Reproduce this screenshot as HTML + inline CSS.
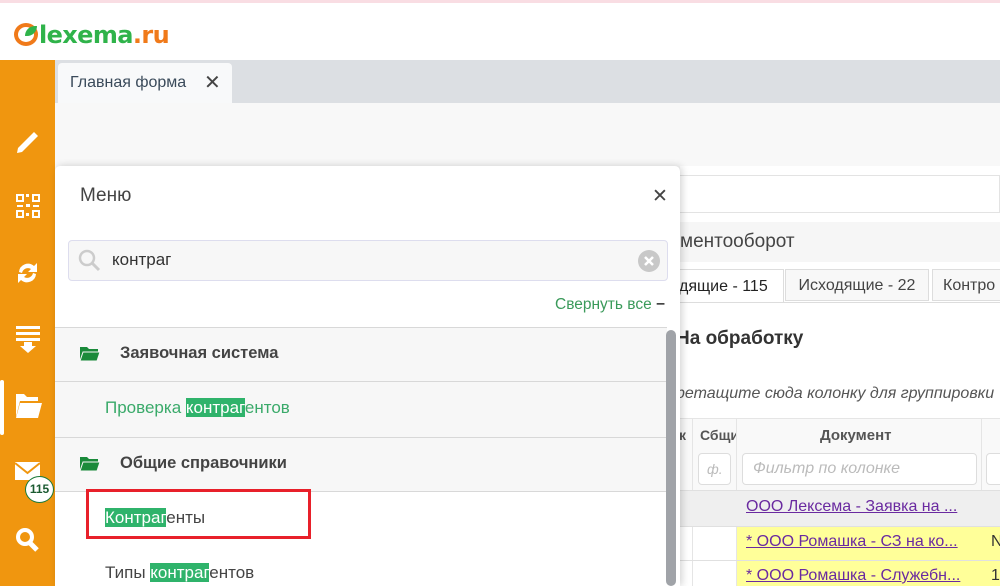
<!DOCTYPE html>
<html><head><meta charset="utf-8"><style>
*{box-sizing:border-box;margin:0;padding:0}
body{width:1000px;height:586px;overflow:hidden;position:relative;background:#fff;font-family:"Liberation Sans","DejaVu Sans",sans-serif;color:#333}
.abs{position:absolute}
.hl{background:#2fb36b;color:#fff}
</style></head><body>
<div class="abs" style="left:0;top:0;width:1000px;height:3px;background:#f9dde3"></div>
<div class="abs" style="left:14px;top:18px;font-size:24px;font-weight:bold;letter-spacing:-0.6px;height:34px;line-height:34px;font-family:'DejaVu Sans',sans-serif">
<span style="display:inline-block;width:24px;height:23px;border:4px solid #f07a1a;border-radius:50%;vertical-align:-3px;position:relative;margin-right:1px"><span style="position:absolute;left:7px;top:-1px;width:12px;height:10px;background:#2fb34a;border-radius:10px 0 10px 0"></span></span><span style="color:#2fb34a">lexema</span><span style="color:#f07a1a">.ru</span></div>
<div class="abs" style="left:0;top:60px;width:55px;height:526px;background:#f0960f"></div>
<div class="abs" style="left:0;top:380px;width:4px;height:55px;background:#fff;border-radius:2px"></div>
<svg class="abs" style="left:10px;top:122px" width="36" height="440" viewBox="0 0 36 440" fill="#fff">
<path d="M8 26 L24 10 L28 14 L12 30 L7 31Z"/>
<g transform="translate(6,72)"><rect x="0" y="0" width="8" height="8"/><rect x="2" y="2" width="4" height="4" fill="#f0960f"/><rect x="16" y="0" width="8" height="8"/><rect x="18" y="2" width="4" height="4" fill="#f0960f"/><rect x="0" y="16" width="8" height="8"/><rect x="2" y="18" width="4" height="4" fill="#f0960f"/><rect x="16" y="16" width="8" height="8"/><rect x="18" y="18" width="4" height="4" fill="#f0960f"/><rect x="10" y="0" width="3" height="3"/><rect x="10" y="10" width="4" height="3"/><rect x="1" y="11" width="6" height="2"/><rect x="17" y="11" width="6" height="2"/><rect x="10" y="19" width="3" height="3"/></g>
<path d="M9 150 a9 9 0 0 1 15 -6 l3 -3 v9 h-9 l3 -3 a6 6 0 0 0 -9 4z M26 152 a9 9 0 0 1 -15 6 l-3 3 v-9 h9 l-3 3 a6 6 0 0 0 9 -4z"/>
<g transform="translate(6,204)"><rect x="0" y="0" width="24" height="3"/><rect x="0" y="6" width="24" height="3"/><rect x="0" y="12" width="24" height="3"/><path d="M8 16 h8 v4 h4 l-8 7 l-8 -7 h4z"/></g>
<path d="M6 272 h8 l3 3 h11 v4 h-18 l-4 16 z M10 281 h22 l-4 15 h-22z"/>
<path d="M5 340 h25 v18 h-25z" /><path d="M5 341 l12.5 10 l12.5 -10" stroke="#f0960f" stroke-width="2" fill="none"/>
<circle cx="15" cy="415" r="7" fill="none" stroke="#fff" stroke-width="4"/><path d="M19 420 l8 8" stroke="#fff" stroke-width="5"/>
</svg>
<div class="abs" style="left:25px;top:476px;width:29px;height:27px;border-radius:50%;background:#fff;border:1px solid #1a7a3a;color:#1a5a30;font-size:12px;font-weight:bold;text-align:center;line-height:25px">115</div>
<div class="abs" style="left:55px;top:60px;width:945px;height:43px;background:#dcdfe3"></div>
<div class="abs" style="left:58px;top:63px;width:174px;height:40px;background:#f8f9fa;border-radius:4px 4px 0 0;font-size:16px;color:#3a4a5a;line-height:40px;padding-left:12px">Главная форма<span style="position:absolute;left:146px;font-size:20px;color:#444;font-weight:bold">✕</span></div>
<div class="abs" style="left:55px;top:103px;width:945px;height:483px;background:#f8f8f8"></div>
<div class="abs" style="left:680px;top:166px;width:320px;height:420px;background:#fff"></div>
<div class="abs" style="left:676px;top:175px;width:324px;height:38px;border:1px solid #e3e3e3;background:#fff"></div>
<div class="abs" style="left:676px;top:222px;width:324px;height:40px;background:#f6f6f6;font-size:19px;line-height:40px;color:#444;padding-left:4px">ментооборот</div>
<div class="abs" style="left:676px;top:269px;width:108px;height:34px;border:1px solid #ddd;border-bottom:none;background:#fff;font-size:16px;line-height:34px;color:#222;padding-left:2px">дящие - 115</div>
<div class="abs" style="left:785px;top:269px;width:144px;height:32px;border:1px solid #ddd;background:#f8f8f8;font-size:16px;line-height:32px;color:#444;text-align:center">Исходящие - 22</div>
<div class="abs" style="left:932px;top:269px;width:80px;height:32px;border:1px solid #ddd;background:#f8f8f8;font-size:16px;line-height:32px;color:#444;padding-left:10px">Контро</div>
<div class="abs" style="left:676px;top:302px;width:324px;height:1px;background:#ddd"></div>
<div class="abs" style="left:676px;top:328px;font-size:19px;font-weight:bold;color:#333">На обработку</div>
<div class="abs" style="left:676px;top:385px;font-size:16px;font-style:italic;color:#555;white-space:nowrap">ретащите сюда колонку для группировки</div>
<div class="abs" style="left:676px;top:418px;width:324px;height:72px;background:#f9f9f9;border-top:1px solid #e5e5e5"></div>
<div class="abs" style="left:692px;top:418px;width:1px;height:168px;background:#e5e5e5"></div>
<div class="abs" style="left:736px;top:418px;width:1px;height:168px;background:#e5e5e5"></div>
<div class="abs" style="left:981px;top:418px;width:1px;height:168px;background:#e5e5e5"></div>
<div class="abs" style="left:679px;top:427px;font-size:14px;font-weight:bold;color:#555">к</div>
<div class="abs" style="left:700px;top:427px;font-size:14px;font-weight:bold;color:#555;width:36px;overflow:hidden;white-space:nowrap">Сбщи</div>
<div class="abs" style="left:820px;top:427px;font-size:15px;font-weight:bold;color:#555">Документ</div>
<div class="abs" style="left:698px;top:453px;width:33px;height:32px;border:1px solid #ddd;border-radius:4px;background:#fff;font-size:14px;font-style:italic;color:#bbb;line-height:30px;padding-left:8px">ф.</div>
<div class="abs" style="left:742px;top:453px;width:235px;height:32px;border:1px solid #ddd;border-radius:4px;background:#fff;font-size:16px;font-style:italic;color:#bbb;line-height:30px;padding-left:10px">Фильтр по колонке</div>
<div class="abs" style="left:986px;top:453px;width:20px;height:32px;border:1px solid #ddd;border-radius:4px;background:#fff"></div>
<div class="abs" style="left:676px;top:490px;width:324px;height:36px;background:#efefef;border-top:1px solid #e0e0e0"></div>
<div class="abs" style="left:737px;top:526px;width:263px;height:60px;background:#ffff99"></div>
<div class="abs" style="left:676px;top:526px;width:324px;height:1px;background:#e0e0e0"></div>
<div class="abs" style="left:676px;top:560px;width:324px;height:1px;background:#e0e0e0"></div>
<div class="abs" style="left:746px;top:498px;font-size:16px;color:#6a2aa0;text-decoration:underline;white-space:nowrap">ООО Лексема - Заявка на ...</div>
<div class="abs" style="left:746px;top:533px;font-size:16px;color:#6a2aa0;text-decoration:underline;white-space:nowrap">* ООО Ромашка - СЗ на ко...</div>
<div class="abs" style="left:746px;top:567px;font-size:16px;color:#6a2aa0;text-decoration:underline;white-space:nowrap">* ООО Ромашка - Служебн...</div>
<div class="abs" style="left:991px;top:533px;font-size:16px;color:#333">N</div>
<div class="abs" style="left:991px;top:567px;font-size:16px;color:#333">1</div>
<div class="abs" style="left:55px;top:166px;width:625px;height:420px;background:#fff;border-radius:5px 5px 0 0;box-shadow:2px 0 8px rgba(0,0,0,.18)"></div>
<div class="abs" style="left:80px;top:185px;font-size:19px;color:#444">Меню</div>
<div class="abs" style="left:652px;top:185px;font-size:19px;color:#444;font-weight:bold">✕</div>
<div class="abs" style="left:68px;top:240px;width:600px;height:41px;background:#f7f7f7;border:1px solid #dde;border-radius:4px"></div>
<svg class="abs" style="left:78px;top:249px" width="24" height="24"><circle cx="9" cy="9" r="7" fill="none" stroke="#ccc" stroke-width="2.5"/><path d="M14 14 l7 7" stroke="#ccc" stroke-width="3"/></svg>
<div class="abs" style="left:112px;top:250px;font-size:17px;color:#333">контраг</div>
<svg class="abs" style="left:638px;top:250px" width="22" height="22"><circle cx="11" cy="11" r="11" fill="#c8c8c8"/><path d="M7 7 l8 8 M15 7 l-8 8" stroke="#fff" stroke-width="2.5"/></svg>
<div class="abs" style="left:555px;top:296px;font-size:15.5px;color:#3a9a5a">Свернуть все <b style="color:#444">−</b></div>
<div class="abs" style="left:55px;top:327px;width:612px;height:164px;background:#f7f7f7"></div>
<div class="abs" style="left:55px;top:327px;width:612px;height:1px;background:#d8d8d8"></div>
<div class="abs" style="left:55px;top:381px;width:612px;height:1px;background:#d8d8d8"></div>
<div class="abs" style="left:55px;top:437px;width:612px;height:1px;background:#d8d8d8"></div>
<div class="abs" style="left:55px;top:491px;width:612px;height:1px;background:#d8d8d8"></div>
<svg class="abs" style="left:80px;top:346px" width="20" height="15"><path d="M0 1 h7 l2 2 h9 v11 h-18z" fill="#1a8a3a"/><path d="M3 6 h17 l-3 9 h-17z" fill="#1a8a3a" stroke="#f7f7f7" stroke-width="1"/></svg>
<svg class="abs" style="left:80px;top:456px" width="20" height="15"><path d="M0 1 h7 l2 2 h9 v11 h-18z" fill="#1a8a3a"/><path d="M3 6 h17 l-3 9 h-17z" fill="#1a8a3a" stroke="#f7f7f7" stroke-width="1"/></svg>
<div class="abs" style="left:120px;top:344px;font-size:16.5px;font-weight:bold;color:#444">Заявочная система</div>
<div class="abs" style="left:105px;top:398px;font-size:17px;color:#3aaa6a">Проверка <span class="hl">контраг</span>ентов</div>
<div class="abs" style="left:120px;top:454px;font-size:16.5px;font-weight:bold;color:#444">Общие справочники</div>
<div class="abs" style="left:105px;top:508px;font-size:17px;color:#444"><span class="hl">Контраг</span>енты</div>
<div class="abs" style="left:105px;top:563px;font-size:17px;color:#444">Типы <span class="hl">контраг</span>ентов</div>
<div class="abs" style="left:86px;top:489px;width:225px;height:50px;border:3px solid #e8202a"></div>
<div class="abs" style="left:666px;top:330px;width:10px;height:256px;background:#a0a3a8;border-radius:5px"></div>
</body></html>
